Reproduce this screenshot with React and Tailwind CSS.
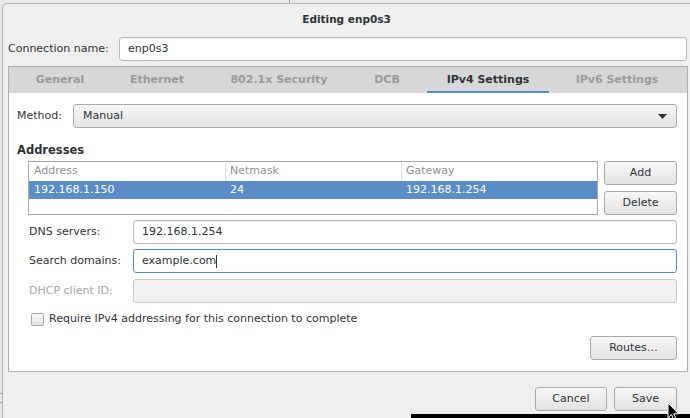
export default function App() {
  const inputCls =
    "flex-1 h-full flex items-center border border-[#b8b8b8] rounded-[3px] bg-white pl-[8px] shadow-[inset_0_1px_1px_rgba(0,0,0,0.06)]";
  const btnCls =
    "flex items-center justify-center border border-[#a9a9a9] rounded-[3px] bg-linear-to-b from-[#f7f7f7] to-[#e3e3e3] shadow-[0_1px_0_rgba(255,255,255,0.8)]";
  return (
    <div className="relative w-[690px] h-[418px] overflow-hidden bg-[#e9e9e9] font-['DejaVu_Sans',sans-serif] text-[11px] text-[#2e3436]">
      <div className="absolute left-[289px] top-0 w-px h-[3px] bg-[#a8a8a8]" />
      <div className="ml-[2px] mt-[3px] h-[415px] border-l border-t border-[#b2b2b2] rounded-tl-[5px] bg-[#efefef]">
        {/* title */}
        <div className="h-[31px] flex items-center justify-center font-bold text-[10.5px] text-[#2e3436]">
          Editing enp0s3
        </div>
        {/* connection name */}
        <div className="mt-[2px] h-[24px] flex items-center pl-[5px]">
          <div className="w-[111px]">Connection name:</div>
          <div className="w-[568px] h-full flex items-center border border-[#b8b8b8] rounded-[3px] bg-white pl-[8px] shadow-[inset_0_1px_1px_rgba(0,0,0,0.06)]">
            enp0s3
          </div>
        </div>
        {/* notebook */}
        <div className="mt-[5px] ml-[5px] w-[680px]">
          <div className="h-[27px] flex bg-[#d7d7d7] border border-b-0 border-[#b0b0b0] font-bold text-[#9a9a9a]">
            <div className="ml-[6px] w-[90px] flex items-center justify-center">General</div>
            <div className="ml-[6px] w-[92px] flex items-center justify-center">Ethernet</div>
            <div className="ml-[6px] w-[140px] flex items-center justify-center">802.1x Security</div>
            <div className="ml-[6px] w-[64px] flex items-center justify-center">DCB</div>
            <div className="ml-[8px] w-[122px] flex items-center justify-center text-[#2e3436] border-b-[2px] border-[#4a90d9] pt-[2px]">
              IPv4 Settings
            </div>
            <div className="ml-[6px] w-[124px] flex items-center justify-center">IPv6 Settings</div>
          </div>
          <div className="h-[279px] bg-white border border-t-0 border-[#b0b0b0] pl-[8px] pr-[10px] pt-[11px]">
            {/* method */}
            <div className="h-[24px] flex items-center">
              <div className="w-[56px]">Method:</div>
              <div className="flex-1 h-full flex items-center justify-between border border-[#aaaaaa] rounded-[3px] bg-linear-to-b from-[#f7f7f7] to-[#e4e4e4] pl-[9px] pr-[9px]">
                <span>Manual</span>
                <svg width="9" height="5" viewBox="0 0 9 5">
                  <path d="M0 0 L9 0 L4.5 5 Z" fill="#2e3436" />
                </svg>
              </div>
            </div>
            {/* addresses */}
            <div className="mt-[14px] h-[16px] leading-[16px] font-bold text-[11.5px]">Addresses</div>
            <div className="mt-[3px] flex">
              <div className="ml-[11px] w-[570px] h-[54px] border border-[#a9a9a9] bg-white">
                <div className="h-[19px] flex text-[#8e9192]">
                  <div className="w-[196px] pl-[5px] flex items-center">Address</div>
                  <div className="w-[176px] pl-[4px] flex items-center border-l border-[#dedede]">Netmask</div>
                  <div className="flex-1 pl-[4px] flex items-center border-l border-[#dedede]">Gateway</div>
                </div>
                <div className="h-[18px] flex bg-[#5b8ec6] text-white">
                  <div className="w-[196px] pl-[5px] flex items-center">192.168.1.150</div>
                  <div className="w-[176px] pl-[5px] flex items-center">24</div>
                  <div className="flex-1 pl-[5px] flex items-center">192.168.1.254</div>
                </div>
              </div>
              <div className="ml-[6px] w-[73px] flex flex-col">
                <div className={btnCls + " h-[24px]"}>Add</div>
                <div className={btnCls + " h-[24px] mt-[6px]"}>Delete</div>
              </div>
            </div>
            {/* dns */}
            <div className="mt-[5px] h-[24px] flex items-center pl-[12px]">
              <div className="w-[104px]">DNS servers:</div>
              <div className={inputCls}>192.168.1.254</div>
            </div>
            <div className="mt-[5px] h-[24px] flex items-center pl-[12px]">
              <div className="w-[104px]">Search domains:</div>
              <div className="flex-1 h-full flex items-center border border-[#4a90d9] rounded-[3px] bg-white pl-[8px]">
                <span>example.com</span>
                <span className="w-px h-[13px] bg-[#2e3436]" />
              </div>
            </div>
            <div className="mt-[6px] h-[24px] flex items-center pl-[12px]">
              <div className="w-[104px] text-[#a3a5a5]">DHCP client ID:</div>
              <div className="flex-1 h-full border border-[#c9c9c9] rounded-[3px] bg-[#f1f1f1]" />
            </div>
            {/* checkbox */}
            <div className="mt-[10px] h-[13px] flex items-center pl-[14px]">
              <div className="w-[13px] h-[13px] border border-[#a6a6a6] rounded-[2px] bg-linear-to-b from-[#fafafa] to-[#e3e3e3]" />
              <div className="ml-[5px]">Require IPv4 addressing for this connection to complete</div>
            </div>
            {/* routes */}
            <div className="mt-[10px] flex justify-end">
              <div className={btnCls + " w-[87px] h-[24px]"}>Routes…</div>
            </div>
          </div>
        </div>
        {/* bottom buttons */}
        <div className="mt-[15px] flex justify-end pr-[13px]">
          <div className={btnCls + " w-[72px] h-[24px]"}>Cancel</div>
          <div className={btnCls + " w-[63px] h-[24px] ml-[7px]"}>Save</div>
        </div>
      </div>
      <div className="absolute left-0 top-[393px] w-[2px] h-[10px] border-y border-[#9c9c9c]" />
      <div className="absolute left-[411px] top-[414px] w-[279px] h-[4px] bg-black" />
      <svg className="absolute left-[667px] top-[402px]" width="14" height="20" viewBox="0 0 14 20">
        <path d="M1 1 L1 16 L4.5 12.5 L7 18.5 L9.3 17.5 L6.8 11.8 L11.5 11.8 Z" fill="#000" stroke="#fff" strokeWidth="1" />
      </svg>
    </div>
  );
}
